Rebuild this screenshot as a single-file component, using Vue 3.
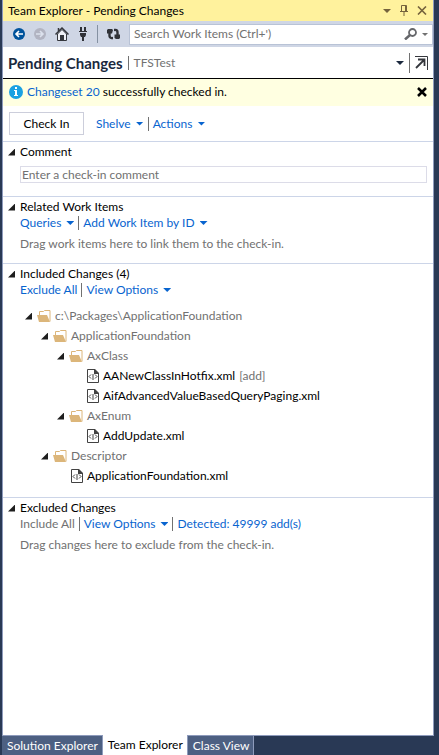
<script setup>
import { ref } from 'vue'

const search = ref('')
const comment = ref('')
const activeTab = ref('Team Explorer')
const tabs = ['Solution Explorer', 'Team Explorer', 'Class View']

const tree = [
  { name: 'c:\\Packages\\ApplicationFoundation', kind: 'folder', level: 0 },
  { name: 'ApplicationFoundation', kind: 'folder', level: 1 },
  { name: 'AxClass', kind: 'folder', level: 2 },
  { name: 'AANewClassInHotfix.xml', kind: 'file', level: 3, note: '[add]' },
  { name: 'AifAdvancedValueBasedQueryPaging.xml', kind: 'file', level: 3 },
  { name: 'AxEnum', kind: 'folder', level: 2 },
  { name: 'AddUpdate.xml', kind: 'file', level: 3 },
  { name: 'Descriptor', kind: 'folder', level: 1 },
  { name: 'ApplicationFoundation.xml', kind: 'file', level: 2 },
]
</script>

<template>
  <div class="shell">
    <main class="window">
      <header class="titlebar">
        <span class="grow">Team Explorer - Pending Changes</span>
        <button class="icon" aria-label="Window options">
          <svg width="8" height="4" viewBox="0 0 8 4"><path d="M0 0h8L4 4z" fill="#75633d" /></svg>
        </button>
        <button class="icon" aria-label="Pin">
          <svg width="8" height="11" viewBox="0 0 8 11" fill="none" stroke="#75633d"><path d="M1.500 6V.5h5V6M0 6.500h8M4 7v4M5.500 1v5" /></svg>
        </button>
        <button class="icon" aria-label="Close">
          <svg width="10" height="9" viewBox="0 0 10 9"><path d="M1 .5l8 8M9 .5l-8 8" stroke="#75633d" stroke-width="1.600" /></svg>
        </button>
      </header>

      <div class="toolbar">
        <button class="icon" aria-label="Back">
          <svg width="12" height="12" viewBox="0 0 12 12"><circle cx="6" cy="6" r="6" fill="#00539c" /><path d="M10 6H3M6 3L3 6l3 3" fill="none" stroke="#fff" stroke-width="1.600" /></svg>
        </button>
        <button class="icon" aria-label="Forward">
          <svg width="12" height="12" viewBox="0 0 12 12"><circle cx="6" cy="6" r="6" fill="#b2b4c2" /><path d="M2 6h7M6 3l3 3-3 3" fill="none" stroke="#dce1ed" stroke-width="1.600" /></svg>
        </button>
        <button class="icon" aria-label="Home">
          <svg width="14" height="14" viewBox="0 0 14 14"><path d="M2.500 7v6.500h9V7L7 2.500z" fill="#eef0f6" stroke="#35373d" /><path d="M.5 7.500L7 1l6.500 6.500M3.500 4V1" fill="none" stroke="#35373d" stroke-width="1.500" /><path d="M5 8h4v6H5z" fill="#35373d" /></svg>
        </button>
        <button class="icon" aria-label="Connect">
          <svg width="10" height="14" viewBox="0 0 10 14" fill="#303238"><path d="M2 0h2v4H2zM6 0h2v4H6zM1 4h8v1H1zM2 6h6v2L7 10H3L2 8zM4 10h2v4H4z" /></svg>
        </button>
        <span class="tool-line"></span>
        <button class="icon" aria-label="Refresh">
          <svg width="13" height="12" viewBox="0 0 13 12"><path d="M6 10H4.500Q2.500 10 2.500 7.500V4M7 2h1.500Q10.500 2 10.500 4.500V8" fill="none" stroke="#303238" stroke-width="2.400" /><path d="M0 5.500V2l1-1h4l1 1-1 3.500zM7.500 6.500H13V10l-1 1H9L7.500 10z" fill="#303238" /><path d="M4 6.500h2v2H4zM7 3.500h2v2H7z" fill="#cfd6e5" /></svg>
        </button>
        <div class="search">
          <input v-model="search" aria-label="Search Work Items" placeholder="Search Work Items (Ctrl+')" />
          <button class="icon" aria-label="Search">
            <svg width="13" height="12" viewBox="0 0 13 12" fill="none" stroke="#66676b"><circle cx="8.500" cy="4.500" r="3.500" stroke-width="1.800" /><path d="M6 7l-5 4.500" stroke-width="2.500" /></svg>
          </button>
          <button class="icon" aria-label="Search options">
            <svg width="6" height="3" viewBox="0 0 6 3"><path d="M0 0h6L3 3z" fill="#717171" /></svg>
          </button>
        </div>
      </div>

      <div class="heading">
        <h1>Pending Changes</h1>
        <span class="bar"></span>
        <span class="project">TFSTest</span>
        <button class="icon" aria-label="Switch page">
          <svg width="8" height="4" viewBox="0 0 8 4"><path d="M0 0h8L4 4z" fill="#1b293e" /></svg>
        </button>
        <span class="bar tall"></span>
        <button class="icon" aria-label="Undock">
          <svg width="13" height="14" viewBox="0 0 13 14" fill="none" stroke="#35373d"><path d="M0 .5h12.500V14" /><path d="M1 12l8-8M3 3.500h6.500V10" stroke-width="1.800" /></svg>
        </button>
      </div>

      <div class="notice">
        <svg width="14" height="14" viewBox="0 0 14 14"><circle cx="7" cy="7" r="7" fill="#1ba1e2" /><path d="M6 2h2v2H6zM5 5h3v5h1v1H5v-1h1V6H5z" fill="#fff" /></svg>
        <p><a href="#">Changeset 20</a> successfully checked in.</p>
        <button class="icon" aria-label="Dismiss">
          <svg width="10" height="10" viewBox="0 0 10 10"><path d="M1 1l8 8M9 1L1 9" stroke="#000" stroke-width="2.500" /></svg>
        </button>
      </div>

      <div class="actions">
        <button class="checkin">Check In</button>
        <div class="links">
          <button class="link">Shelve<i class="caret"></i></button>
          <span class="bar"></span>
          <button class="link">Actions<i class="caret"></i></button>
        </div>
      </div>

      <section class="comment">
        <h2><i class="expander"></i><label for="comment">Comment</label></h2>
        <input id="comment" v-model="comment" placeholder="Enter a check-in comment" />
      </section>

      <section>
        <h2><i class="expander"></i>Related Work Items</h2>
        <div class="links">
          <button class="link">Queries<i class="caret"></i></button>
          <span class="bar"></span>
          <button class="link">Add Work Item by ID<i class="caret"></i></button>
        </div>
        <p class="hint">Drag work items here to link them to the check-in.</p>
      </section>

      <section class="included">
        <h2><i class="expander"></i>Included Changes (4)</h2>
        <div class="links">
          <button class="link">Exclude All</button>
          <span class="bar"></span>
          <button class="link">View Options<i class="caret"></i></button>
        </div>
        <ul class="tree">
          <li v-for="(node, i) in tree" :key="i" :class="[node.kind, 'level-' + node.level]">
            <i v-if="node.kind === 'folder'" class="expander"></i>
            <svg v-if="node.kind === 'folder'" width="14" height="12" viewBox="0 0 14 12">
              <path d="M2.500 5V1.500h4l1-1h5.500v11" fill="#fff" stroke="#dcb67a" />
              <path d="M0 5h10l3 7H2z" fill="#dcb67a" />
            </svg>
            <svg v-else width="12" height="14" viewBox="0 0 12 14">
              <path d="M.5.5h7l4 4v9H.5z" fill="#fff" stroke="#424242" />
              <path d="M7 0h1l4 4v1H7z" fill="#424242" />
              <path d="M4 5.500L2 7.500l2 2M8 5.500l2 2-2 2M6 5v6" fill="none" stroke="#424242" />
            </svg>
            <span>{{ node.name }}</span>
            <span v-if="node.note" class="note">{{ node.note }}</span>
          </li>
        </ul>
      </section>

      <section>
        <h2><i class="expander"></i>Excluded Changes</h2>
        <div class="links">
          <button class="link" disabled>Include All</button>
          <span class="bar"></span>
          <button class="link">View Options<i class="caret"></i></button>
          <span class="bar"></span>
          <button class="link">Detected: 49999 add(s)</button>
        </div>
        <p class="hint">Drag changes here to exclude from the check-in.</p>
      </section>
    </main>

    <nav class="tabs">
      <button v-for="tab in tabs" :key="tab" :class="{ active: tab === activeTab }" @click="activeTab = tab">{{ tab }}</button>
    </nav>
  </div>
</template>

<style>
body {
  background: #293955;
}
</style>

<style scoped>
.shell {
  box-sizing: border-box;
  display: flex;
  flex-direction: column;
  min-height: 100vh;
  padding: 0 5px 0 2px;
  background: #293955;
  color: #000;
  font: 12px/16px Lato, "Open Sans", sans-serif;
}
.shell * {
  box-sizing: border-box;
}
button,
input {
  margin: 0;
  padding: 0;
  border: 0;
  background: none;
  color: inherit;
  font: inherit;
}
h1,
h2,
p,
ul {
  margin: 0;
  padding: 0;
}
svg {
  display: block;
  flex: none;
}
.window {
  flex: 1;
  background: #fff;
  border: 1px solid #8e9bbc;
  border-top: 0;
}
.icon {
  display: flex;
  flex: none;
}
.grow {
  flex: 1;
}
.titlebar {
  display: flex;
  align-items: center;
  gap: 9px;
  height: 21px;
  padding: 0 6px 0 5px;
  background: #fff29d;
}
.toolbar {
  display: flex;
  align-items: center;
  gap: 9px;
  height: 26px;
  padding: 0 0 0 10px;
  background: #cfd6e5;
}
.tool-line {
  width: 1px;
  height: 18px;
  background: #8591a2;
}
.search {
  display: flex;
  flex: 1;
  align-items: center;
  gap: 5px;
  height: 21px;
  padding: 0 4px;
  border: 1px solid #b9c3d6;
  background: #fff;
}
.search input {
  flex: 1;
  min-width: 0;
}
input {
  outline: 0;
}
input::placeholder {
  color: #717171;
  opacity: 1;
}
.heading {
  display: flex;
  align-items: center;
  gap: 5px;
  height: 31px;
  padding: 0 5px;
}
h1 {
  color: #1b293e;
  font-size: 15px;
  font-weight: 700;
  line-height: 20px;
}
.project {
  flex: 1;
  color: #717171;
}
.bar {
  width: 1px;
  height: 14px;
  background: #717171;
}
.bar.tall {
  height: 20px;
}
.notice {
  display: flex;
  align-items: center;
  gap: 4px;
  height: 28px;
  padding: 0 6px 2px;
  border-top: 1px solid #000;
  background: #ffffe1;
}
.notice p {
  flex: 1;
}
a,
.link {
  color: #0864cf;
  text-decoration: none;
}
.link:disabled {
  color: #717171;
}
.actions {
  display: flex;
  align-items: center;
  gap: 12px;
  height: 35px;
  padding: 0 6px;
}
.checkin {
  width: 75px;
  height: 23px;
  border: 1px solid #cccedb;
}
.links {
  display: flex;
  align-items: center;
  gap: 4px;
}
.link {
  display: flex;
  align-items: center;
  gap: 5px;
  white-space: nowrap;
}
.caret {
  width: 8px;
  height: 4px;
  background: #0864cf;
  clip-path: polygon(0 0, 100% 0, 50% 100%);
}
.expander {
  flex: none;
  width: 7px;
  height: 7px;
  background: #1e1e1e;
  clip-path: polygon(100% 0, 100% 100%, 0 100%);
}
section {
  padding: 2px 6px 11px 17px;
  border-top: 1px solid #ccd5e8;
}
h2 {
  display: flex;
  align-items: center;
  gap: 5px;
  margin-left: -12px;
  font-size: 12px;
  font-weight: 400;
}
.comment {
  padding-bottom: 13px;
}
.comment input {
  display: block;
  width: 100%;
  height: 17px;
  margin-top: 6px;
  padding: 0 1px;
  border: 1px solid #dcdce8;
}
.hint {
  margin-top: 5px;
  color: #717171;
}
.tree {
  margin-top: 8px;
  list-style: none;
}
.tree li {
  display: flex;
  align-items: center;
  gap: 4px;
  height: 20px;
  white-space: nowrap;
}
.tree .expander {
  margin-right: 1px;
}
.tree .folder,
.note {
  color: #717171;
}
.level-0 {
  padding-left: 5px;
}
.level-1 {
  padding-left: 21px;
}
.level-2 {
  padding-left: 37px;
}
.level-3 {
  padding-left: 53px;
}
.file.level-2 {
  padding-left: 51px;
}
.file.level-3 {
  padding-left: 67px;
}
.tabs {
  display: flex;
  height: 19px;
}
.tabs button {
  padding: 0 4px 0 5px;
  border: 1px solid #8e9bbc;
  border-width: 0 1px 0 0;
  background: #4d6082;
  color: #fff;
  white-space: nowrap;
}
.tabs .active {
  margin-top: -1px;
  background: #fff;
  color: #000;
}
</style>
